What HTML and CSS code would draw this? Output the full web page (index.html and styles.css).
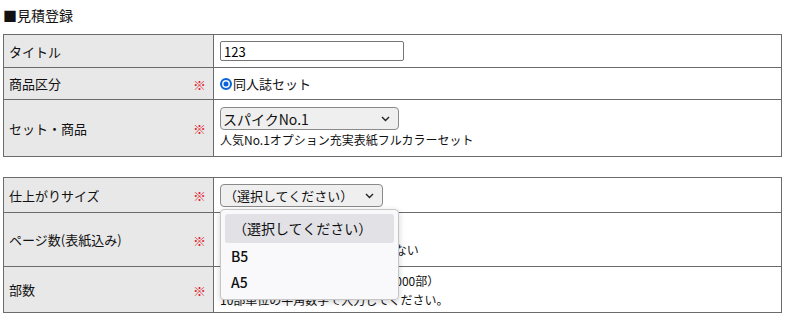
FILE: index.html
```html
<!DOCTYPE html>
<html lang="ja">
<head>
  <meta charset="UTF-8" />
  <title>見積登録</title>
  <link rel="stylesheet" href="styles.css">
</head>
<body>
  <div class="page">
    <h2 class="title">■見積登録</h2>

    <table class="form-table">
      <tr class="row-title">
        <th>タイトル</th>
        <td><input type="text" class="text-input" value="123" /></td>
      </tr>
      <tr class="row-kind">
        <th>商品区分<span class="req">※</span></th>
        <td>
          <label class="radio">
            <span class="radio-dot"></span>同人誌セット
          </label>
        </td>
      </tr>
      <tr class="row-set">
        <th>セット・商品<span class="req">※</span></th>
        <td>
          <span class="select-wrap select-set">
            <select class="select"><option>スパイクNo.1</option></select>
            <svg class="chevron" width="9" height="6" viewBox="0 0 9 6"><path d="M1 1l3.5 3.5L8 1" fill="none" stroke="#222" stroke-width="1.4"/></svg>
          </span>
          <p class="note">人気No.1オプション充実表紙フルカラーセット</p>
        </td>
      </tr>
    </table>

    <table class="form-table second">
      <tr class="row-size">
        <th>仕上がりサイズ<span class="req">※</span></th>
        <td>
          <span class="select-wrap select-size">
            <select class="select small"><option>（選択してください）</option></select>
            <svg class="chevron" width="9" height="6" viewBox="0 0 9 6"><path d="M1 1l3.5 3.5L8 1" fill="none" stroke="#222" stroke-width="1.4"/></svg>
            <div class="popup">
              <div class="option active">（選択してください）</div>
              <div class="option">B5</div>
              <div class="option">A5</div>
            </div>
          </span>
        </td>
      </tr>
      <tr class="row-pages">
        <th>ページ数(表紙込み)<span class="req">※</span></th>
        <td>
          <input type="text" class="text-input short" value="" />
          <p class="note">4の倍数で入力、奇数は受付できない</p>
        </td>
      </tr>
      <tr class="row-count">
        <th>部数<span class="req">※</span></th>
        <td>
          <p class="note">部数を入力してください（50～1000部）</p>
          <p class="note">10部単位の半角数字で入力してください。</p>
        </td>
      </tr>
    </table>
  </div>
</body>
</html>
```

FILE: styles.css
```css
* {
  box-sizing: border-box;
}

body {
  margin: 0;
  background: #fff;
  color: #111;
  font-family: "Noto Sans CJK JP", "Noto Sans", sans-serif;
  font-size: 13px;
}

.page {
  padding: 5px 13px 0 3px;
}

.title {
  margin: 0 0 9px;
  font-size: 14px;
  font-weight: normal;
  line-height: 20px;
}

.form-table {
  width: 779px;
  border-collapse: collapse;
}

.form-table.second {
  margin-top: 20px;
}

.form-table th,
.form-table td {
  border: 1px solid #6b6b6b;
  padding: 0 6px;
  vertical-align: middle;
}

.form-table th {
  position: relative;
  width: 210px;
  background: #e8e8e8;
  font-weight: normal;
  text-align: left;
  padding-left: 5px;
}

.req {
  position: absolute;
  right: 7px;
  top: 50%;
  transform: translateY(-50%);
  color: #e0262d;
  font-size: 13px;
}

.row-title { height: 33px; }
.row-kind { height: 32px; }
.row-set { height: 57px; }
.row-size { height: 35px; }
.row-pages { height: 54px; }
.row-count { height: 46px; }

.text-input {
  width: 184px;
  height: 20px;
  border: 1px solid #767676;
  border-radius: 2px;
  padding: 0 3px;
  font-family: inherit;
  font-size: 13px;
  color: #000;
}

.text-input.short {
  width: 80px;
}

.radio {
  display: flex;
  align-items: center;
  gap: 1px;
}

.radio-dot {
  width: 12px;
  height: 12px;
  border-radius: 50%;
  border: 2px solid #0a63d8;
  background: #fff;
  box-shadow: inset 0 0 0 1.5px #fff, inset 0 0 0 6px #0a63d8;
}

.note {
  margin: 0;
  font-size: 12px;
  line-height: 19px;
}

.select-wrap {
  position: relative;
  display: inline-block;
  vertical-align: middle;
}

.select {
  appearance: none;
  -webkit-appearance: none;
  height: 23px;
  border: 1px solid #8a8a8a;
  border-radius: 4px;
  background: #efefef;
  padding: 0 20px 0 2px;
  font-family: inherit;
  font-size: 14px;
  color: #111;
}

.select-set .select {
  width: 179px;
}

.select-size .select {
  width: 163px;
  font-size: 13px;
  padding-left: 3px;
}

.chevron {
  position: absolute;
  right: 9px;
  top: 9px;
  pointer-events: none;
}

.popup {
  position: absolute;
  left: 0;
  top: 25px;
  z-index: 5;
  width: 179px;
  padding: 4px;
  background: #f9f9fb;
  border: 1px solid #c6c6c6;
  border-radius: 4px;
  box-shadow: 0 2px 6px rgba(0, 0, 0, 0.18);
  font-size: 14px;
}

.option {
  height: 26px;
  line-height: 26px;
  padding-left: 6px;
  color: #111;
  font-weight: 500;
  border-radius: 3px;
}

.option.active {
  height: 29px;
  line-height: 29px;
  background: #e1e1e6;
  padding-left: 8px;
  font-weight: normal;
}
```
